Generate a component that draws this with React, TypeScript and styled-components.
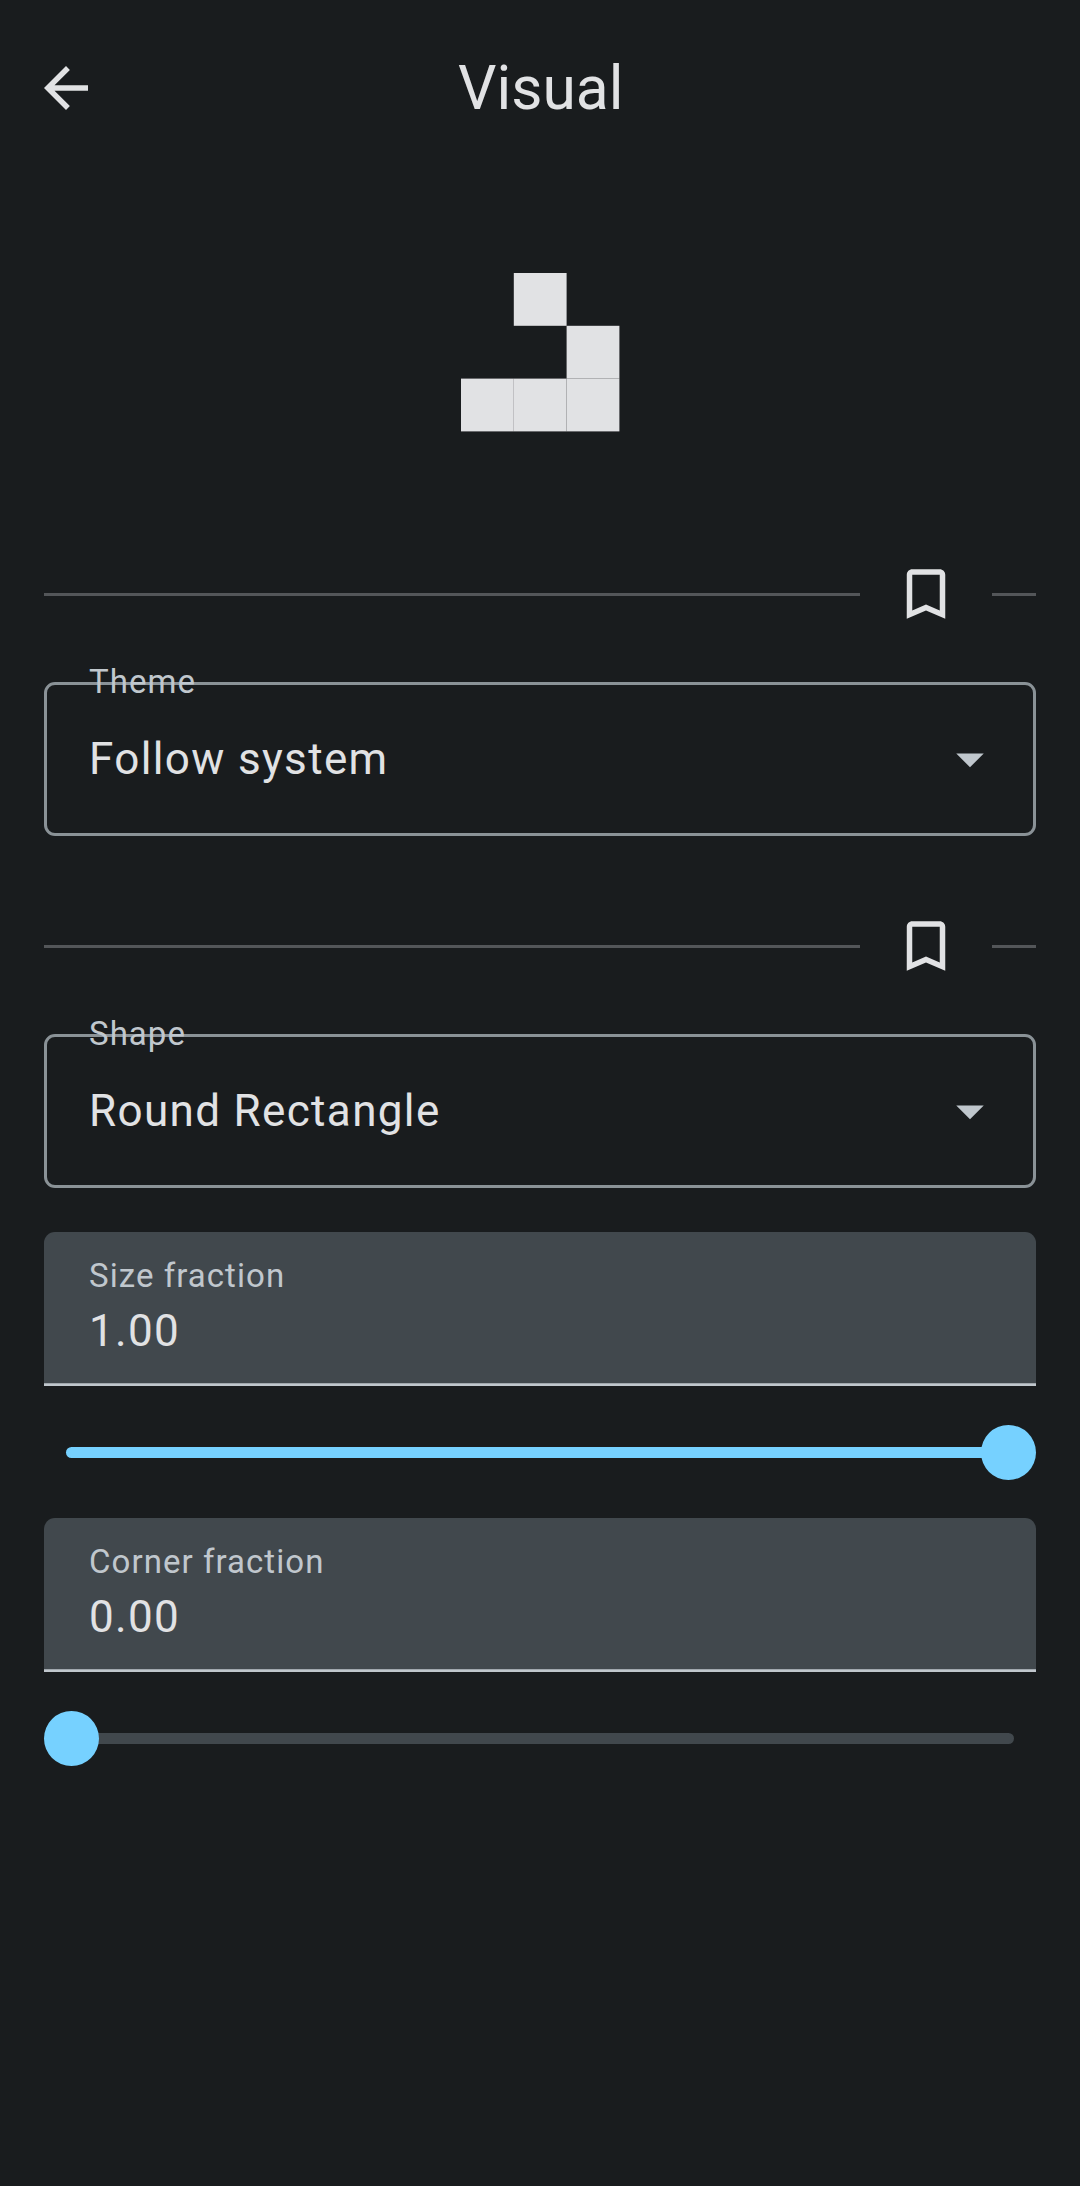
import React from "react";
import styled, { createGlobalStyle } from "styled-components";

const color = {
  background: "#191c1e",
  onSurface: "#e1e2e4",
  variant: "#41484d",
  onVariant: "#c0c7cd",
  outline: "#8a9297",
  divider: "#535659",
  primary: "#76d1ff",
};

const GlobalStyle = createGlobalStyle`
  *, *::before, *::after { box-sizing: border-box; }
  html, body { margin: 0; background: ${color.background}; }
`;

const Screen = styled.div`
  display: flex;
  flex-direction: column;
  width: 1080px;
  height: 2186px;
  overflow: hidden;
  background: ${color.background};
  color: ${color.onSurface};
  font-family: Roboto, "Noto Sans", sans-serif;
`;

const TopBar = styled.header`
  display: grid;
  grid-template-columns: 132px 1fr 132px;
  align-items: center;
  height: 176px;
  flex: none;
`;

const IconButton = styled.button`
  display: flex;
  align-items: center;
  justify-content: center;
  width: 132px;
  height: 132px;
  padding: 0;
  border: 0;
  background: none;
  color: inherit;
`;

const Glyph = styled.svg`
  display: block;
  width: 66px;
  height: 66px;
  fill: currentColor;
`;

const Title = styled.h1`
  margin: 0;
  padding-left: 1.5px;
  font-size: 60.5px;
  line-height: 77px;
  font-weight: 400;
  text-align: center;
`;

const Preview = styled.div`
  display: flex;
  justify-content: center;
  height: 352px;
  flex: none;
  padding: 97px 0 0 2px;
`;

const Pattern = styled.svg`
  display: block;
  width: 160px;
  height: 160px;
  fill: ${color.onSurface};
`;

const Content = styled.main`
  display: flex;
  flex-direction: column;
  padding: 0 44px;
`;

const DividerRow = styled.div`
  display: grid;
  grid-template-columns: 1fr 132px 44px;
  align-items: center;
  height: 132px;
`;

const Rule = styled.hr`
  width: 100%;
  height: 3px;
  margin: 1px 0 0;
  border: 0;
  background: ${color.divider};
`;

const OutlinedField = styled.div`
  position: relative;
  display: flex;
  align-items: center;
  justify-content: space-between;
  height: 154px;
  margin: 22px 0 44px;
  padding: 0 30px 0 42px;
  border: 3px solid ${color.outline};
  border-radius: 11px;
`;

const FieldLabel = styled.span`
  height: 44px;
  font-size: 33px;
  line-height: 44px;
  letter-spacing: 1.05px;
  color: ${color.onVariant};
`;

/* Sits on the top border of the outlined field. */
const FloatingLabel = styled(FieldLabel)`
  position: absolute;
  left: 42px;
  top: -25px;
`;

const Value = styled.span`
  font-size: 44px;
  line-height: 66px;
  letter-spacing: 1.35px;
`;

const DropGlyph = styled(Glyph)`
  color: ${color.onVariant};
`;

const FilledField = styled.div`
  display: flex;
  flex-direction: column;
  height: 154px;
  padding: 22px 45px 0;
  border-radius: 11px 11px 0 0;
  background: linear-gradient(
    to top,
    ${color.onVariant} 2px,
    #a0a7ad 2px 3px,
    ${color.variant} 3px
  );
`;

const SliderRow = styled.div`
  display: flex;
  align-items: center;
  height: 132px;
  padding-top: 1px;
`;

const Segment = styled.span<{ $grow: number; $side: "start" | "end" }>`
  flex: ${(p) => p.$grow} 1 0;
  height: 11px;
  background: ${(p) => (p.$side === "start" ? color.primary : color.variant)};
  border-radius: ${(p) => (p.$side === "start" ? "5.5px 0 0 5.5px" : "0 5.5px 5.5px 0")};
  margin: ${(p) =>
    p.$grow === 0 ? "0" : p.$side === "start" ? "0 -6px 0 21.5px" : "0 22px 0 -6px"};
`;

const Thumb = styled.span`
  flex: none;
  width: 55px;
  height: 55px;
  border-radius: 50%;
  background: ${color.primary};
  z-index: 1;
`;

function BookmarkDivider() {
  return (
    <DividerRow>
      <Rule />
      <IconButton aria-label="Bookmark">
        <Glyph viewBox="0 0 24 24">
          <path d="M17 3H7c-1.1 0-1.99.9-1.99 2L5 21l7-3 7 3V5c0-1.1-.9-2-2-2zm0 15-5-2.18L7 18V5h10v13z" />
        </Glyph>
      </IconButton>
      <Rule />
    </DividerRow>
  );
}

function Dropdown({ label, value }: { label: string; value: string }) {
  return (
    <OutlinedField>
      <FloatingLabel>{label}</FloatingLabel>
      <Value>{value}</Value>
      <DropGlyph viewBox="0 0 24 24">
        <path d="m7 10 5 5 5-5z" />
      </DropGlyph>
    </OutlinedField>
  );
}

function FractionControl({ label, value }: { label: string; value: number }) {
  return (
    <>
      <FilledField>
        <FieldLabel>{label}</FieldLabel>
        <Value>{value.toFixed(2)}</Value>
      </FilledField>
      <SliderRow role="slider" aria-label={label} aria-valuenow={value}>
        <Segment $side="start" $grow={value} />
        <Thumb />
        <Segment $side="end" $grow={1 - value} />
      </SliderRow>
    </>
  );
}

const CELL = 52.8;
const LIVE_CELLS = [
  [1, 0],
  [2, 1],
  [0, 2],
  [1, 2],
  [2, 2],
];

export default function App() {
  return (
    <>
      <GlobalStyle />
      <Screen>
        <TopBar>
          <IconButton aria-label="Back">
            <Glyph viewBox="0 0 24 24">
              <path d="M20 11H7.83l5.59-5.59L12 4l-8 8 8 8 1.41-1.41L7.83 13H20v-2z" />
            </Glyph>
          </IconButton>
          <Title>Visual</Title>
        </TopBar>
        <Preview>
          <Pattern viewBox="0 0 160 160">
            {LIVE_CELLS.map(([x, y]) => (
              <rect key={`${x}-${y}`} x={x * CELL} y={y * CELL} width={CELL} height={CELL} />
            ))}
          </Pattern>
        </Preview>
        <Content>
          <BookmarkDivider />
          <Dropdown label="Theme" value="Follow system" />
          <BookmarkDivider />
          <Dropdown label="Shape" value="Round Rectangle" />
          <FractionControl label="Size fraction" value={1} />
          <FractionControl label="Corner fraction" value={0} />
        </Content>
      </Screen>
    </>
  );
}
